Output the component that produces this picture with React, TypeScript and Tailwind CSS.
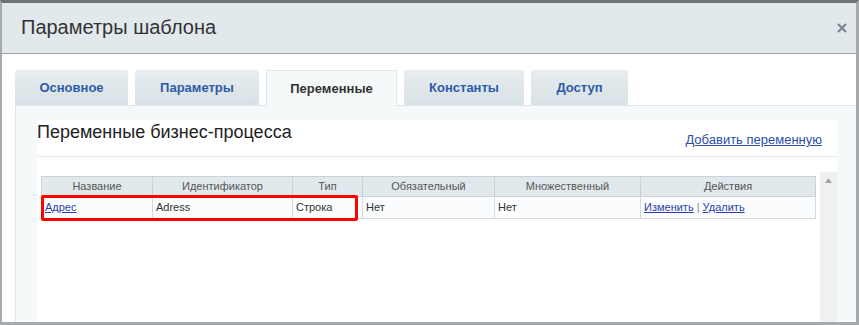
import React from "react";

const tabs = [
  { name: "Основное", w: "w-[113px]" },
  { name: "Параметры", w: "w-[124px]" },
  { name: "Переменные", w: "w-[131px]", active: true },
  { name: "Константы", w: "w-[120px]" },
  { name: "Доступ", w: "w-[97px]" },
];

const columns = [
  { name: "Название", w: "w-[111px]" },
  { name: "Идентификатор", w: "w-[140px]" },
  { name: "Тип", w: "w-[70px]" },
  { name: "Обязательный", w: "w-[132px]" },
  { name: "Множественный", w: "w-[146px]" },
  { name: "Действия", w: "w-[175px]" },
];

export default function App() {
  return (
    <div className="w-[859px] h-[325px] overflow-hidden bg-white border-t-[3px] border-l-2 border-r-[3px] border-b-[3px] border-t-[#6f7376] border-l-[#a7aaad] border-r-[#a7aaad] border-b-[#a7aaad] font-['Liberation_Sans',Arial,sans-serif] flex flex-col">
      {/* Header */}
      <div className="h-[51px] shrink-0 bg-[#e2e9ec] border-b border-[#9ea5a9] flex items-center justify-between pl-[19px] pr-[5px]">
        <h1 className="text-[20px] text-[#333] leading-none mt-[-2px]">Параметры шаблона</h1>
        <button className="w-[18px] h-[18px] flex items-center justify-center text-[#7c858b]">
          <svg width="10" height="10" viewBox="0 0 10 10">
            <path d="M1 1 L9 9 M9 1 L1 9" stroke="currentColor" strokeWidth="2.2" />
          </svg>
        </button>
      </div>

      {/* Body */}
      <div className="flex-1 flex flex-col pt-4 pl-[13px]">
        <div className="flex gap-[7px] h-[35px] shrink-0">
          {tabs.map((t) => (
            <div
              key={t.name}
              className={`${t.w} h-[35px] rounded-t-[2px] flex items-center justify-center text-[13px] font-bold ${
                t.active
                  ? "bg-[#f5f9fa] text-[#333] border border-b-0 border-[#dfe6e9] relative z-10 h-[36px]"
                  : "bg-gradient-to-b from-[#e7edf0] to-[#d8e1e5] text-[#2e5aa8]"
              }`}
            >
              {t.name}
            </div>
          ))}
        </div>

        <div className="flex-1 bg-[#f5f9fa] border-l border-t border-[#dfe6e9] pl-[21px] pt-[14px] pr-[19px] flex flex-col">
          <div className="flex-1 bg-white flex flex-col">
            <div className="h-[37px] shrink-0 flex items-start justify-between border-b border-[#e3e7e9]">
              <h2 className="text-[18px] text-[#222] leading-none mt-[3px]">Переменные бизнес-процесса</h2>
              <a href="#" className="text-[13px] text-[#2b4fa6] underline mt-[10px] mr-[15px]">
                Добавить переменную
              </a>
            </div>

            <div className="flex-1 flex">
              <div className="flex-1 pl-[4px] pt-[19px]">
                <div className="relative w-[774px]">
                  <table className="border-collapse text-[11px] w-[774px] table-fixed">
                    <thead>
                      <tr className="h-[20px] bg-[#e2e9ed]">
                        {columns.map((c) => (
                          <th
                            key={c.name}
                            className={`${c.w} border border-[#c9d2d8] font-normal text-[#555] text-center px-1`}
                          >
                            {c.name}
                          </th>
                        ))}
                      </tr>
                    </thead>
                    <tbody>
                      <tr className="h-[22px] bg-[#fbfcfd] text-[#333]">
                        <td className="border border-[#d3dbe1] px-[3px]">
                          <a href="#" className="text-[#2b3fa6] underline">Адрес</a>
                        </td>
                        <td className="border border-[#d3dbe1] px-[3px]">Adress</td>
                        <td className="border border-[#d3dbe1] px-[3px]">Строка</td>
                        <td className="border border-[#d3dbe1] px-[3px]">Нет</td>
                        <td className="border border-[#d3dbe1] px-[3px]">Нет</td>
                        <td className="border border-[#d3dbe1] px-[3px]">
                          <a href="#" className="text-[#2b3fa6] underline">Изменить</a>
                          <span className="text-[#888]"> | </span>
                          <a href="#" className="text-[#2b3fa6] underline">Удалить</a>
                        </td>
                      </tr>
                    </tbody>
                  </table>
                  <div className="absolute left-0 top-[19px] w-[317px] h-[26px] border-[3px] border-[#f00] rounded-[2px] pointer-events-none" />
                </div>
              </div>
              <div className="w-[17px] shrink-0 mt-[15px] bg-[#f0f0f0] flex justify-center pt-[6px]">
                <svg width="7" height="5" viewBox="0 0 7 5">
                  <path d="M3.5 0 L7 5 L0 5 Z" fill="#a3a3a3" />
                </svg>
              </div>
            </div>
          </div>
        </div>
      </div>
    </div>
  );
}
